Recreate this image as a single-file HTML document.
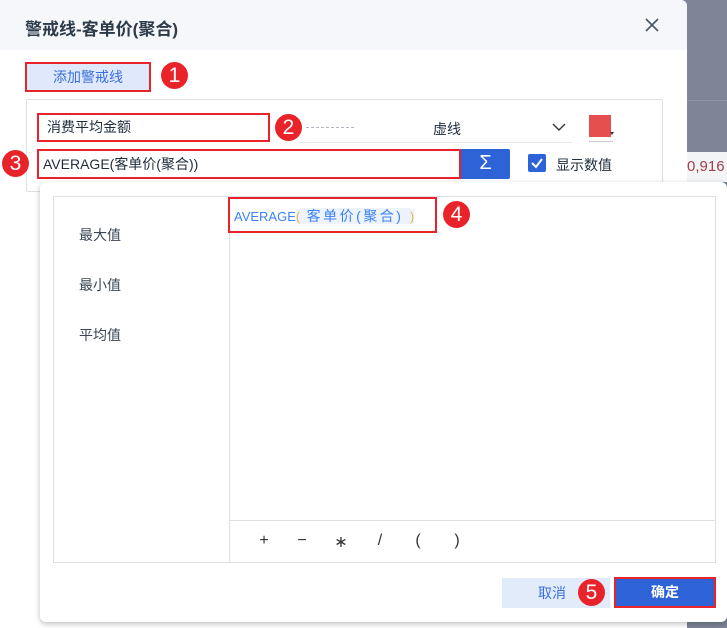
<!DOCTYPE html>
<html><head><meta charset="utf-8"><style>
*{margin:0;padding:0;box-sizing:border-box}
body{width:727px;height:628px;overflow:hidden;background:#7d8597;font-family:"Liberation Sans","Noto Sans CJK SC",sans-serif;position:relative;color:#1f2d3d}
.abs{position:absolute}
.badge{position:absolute;width:27px;height:27px;border-radius:50%;background:#e8242a;color:#fff;font-size:21px;line-height:27px;text-align:center}
.red{border:2px solid #e8242a}
.op{position:absolute;top:532px;font-size:16px;color:#333;width:14px;text-align:center}
</style></head><body>
<div class="abs" style="left:687px;top:100px;width:40px;height:1px;background:#8e95a4"></div>
<div class="abs" style="left:687px;top:152px;width:40px;height:30px;background:#f3f4f6"></div>
<div class="abs" style="left:687px;top:158px;font-size:15px;color:#a0404a">0,916</div>
<div class="abs" style="left:0;top:0;width:687px;height:628px;background:#fff;border-radius:0 6px 0 0"></div>
<div class="abs" style="left:0;top:0;width:687px;height:50px;background:#f5f7fa;border-radius:0 6px 0 0"></div>
<div class="abs" style="left:25px;top:15px;font-size:17px;font-weight:bold;color:#2d3a4a">警戒线-客单价(聚合)</div>
<svg class="abs" style="left:644px;top:17px" width="16" height="16"><path d="M2 2L14 14M14 2L2 14" stroke="#4a5568" stroke-width="1.6"/></svg>
<div class="abs red" style="left:25px;top:62px;height:30px;background:#dfe9fb;color:#3b6fe0;font-size:14px;text-align:center;line-height:26px;width:126px">添加警戒线</div>
<div class="badge" style="left:161px;top:62px">1</div>
<div class="abs" style="left:26px;top:99px;width:637px;height:93px;border:1px solid #dcdfe6;border-radius:2px"></div>
<div class="abs red" style="left:37px;top:113px;width:233px;height:29px;font-size:14px;line-height:25px;padding-left:8px">消费平均金额</div>
<div class="badge" style="left:275px;top:114px">2</div>
<div class="abs" style="left:306px;top:127px;width:48px;border-top:1px dashed #b0b4bc"></div>
<div class="abs" style="left:300px;top:142px;width:272px;height:1px;background:#e4e7ed"></div>
<div class="abs" style="left:433px;top:119px;font-size:14px">虚线</div>
<svg class="abs" style="left:552px;top:122px" width="14" height="10"><path d="M1 2L7 8L13 2" stroke="#333" stroke-width="1.4" fill="none"/></svg>
<div class="abs" style="left:589px;top:115px;width:22px;height:22px;background:#e5504e"></div>
<div class="abs" style="left:589px;top:141px;width:24px;height:1px;background:#ccc"></div>
<div class="abs" style="left:610px;top:132px;width:0;height:0;border:2px solid transparent;border-top:3px solid #333"></div>
<div class="abs red" style="left:37px;top:149px;width:424px;height:30px;font-size:14px;line-height:26px;padding-left:4px">AVERAGE(客单价(聚合))</div>
<div class="badge" style="left:2px;top:150px">3</div>
<div class="abs" style="left:461px;top:149px;width:49px;height:30px;background:#2e63d8;color:#fff;font-size:20px;text-align:center;line-height:29px;border-radius:0 2px 2px 0">Σ</div>
<div class="abs" style="left:528px;top:154px;width:18px;height:18px;background:#2e63d8;border-radius:2px"></div>
<svg class="abs" style="left:530px;top:156px" width="14" height="14"><path d="M2 7L6 11L12 3" stroke="#fff" stroke-width="2" fill="none"/></svg>
<div class="abs" style="left:556px;top:155px;font-size:14px">显示数值</div>
<div class="abs" style="left:40px;top:182px;width:687px;height:440px;background:#fff;border-radius:6px;box-shadow:0 2px 6px rgba(0,0,0,.25)"></div>
<div class="abs" style="left:53px;top:196px;width:663px;height:367px;border:1px solid #dcdfe6"></div>
<div class="abs" style="left:229px;top:196px;width:1px;height:367px;background:#dcdfe6"></div>
<div class="abs" style="left:229px;top:520px;width:487px;height:1px;background:#dcdfe6"></div>
<div class="abs" style="left:79px;top:225px;font-size:14px;color:#3a4556">最大值</div>
<div class="abs" style="left:79px;top:275px;font-size:14px;color:#3a4556">最小值</div>
<div class="abs" style="left:79px;top:325px;font-size:14px;color:#3a4556">平均值</div>
<div class="abs red" style="left:228px;top:197px;width:209px;height:36px"></div>
<div class="abs" style="left:234px;top:206px;font-size:13px;color:#3b82f6;white-space:pre">AVERAGE<span style="color:#e0b84a;background:#eef3fb">(</span><span style="background:#eef3fb;letter-spacing:2.5px;font-size:14px"> 客单价(聚合) </span><span style="color:#e0b84a;background:#eef3fb">)</span></div>
<div class="badge" style="left:443px;top:201px">4</div>
<div class="op" style="left:257px">+</div>
<div class="op" style="left:295px">−</div>
<div class="op" style="left:334px">∗</div>
<div class="op" style="left:373px">/</div>
<div class="op" style="left:411px">(</div>
<div class="op" style="left:450px">)</div>
<div class="abs" style="left:502px;top:578px;width:108px;height:30px;background:#e1ebfa;color:#3b6fe0;font-size:14px;line-height:30px;padding-left:36px">取消</div>
<div class="badge" style="left:578px;top:579px">5</div>
<div class="abs red" style="left:614px;top:577px;width:102px;height:31px;background:#2e63d8;color:#fff;font-size:14px;font-weight:bold;text-align:center;line-height:27px">确定</div>
</body></html>
